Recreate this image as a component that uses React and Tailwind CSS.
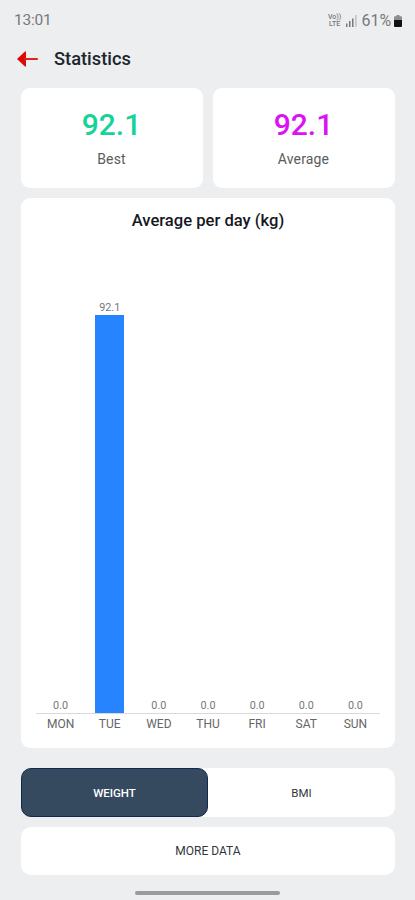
import React from "react";

const days = [
  { name: "MON", value: 0 },
  { name: "TUE", value: 92.1 },
  { name: "WED", value: 0 },
  { name: "THU", value: 0 },
  { name: "FRI", value: 0 },
  { name: "SAT", value: 0 },
  { name: "SUN", value: 0 },
];

const PX_PER_KG = 398 / 92.1;

function StatusBar() {
  return (
    <div className="flex h-[42px] items-center justify-between pl-[14px] pr-[13px] text-[#77797b]">
      <span className="text-[15.5px] leading-none tracking-[-0.2px]">13:01</span>
      <div className="flex items-center">
        <div className="flex w-[14px] flex-col items-center text-[7px] leading-[7px] font-medium">
          <span>Vo))</span>
          <span>LTE</span>
        </div>
        <svg className="ml-[4px]" width="11" height="12" viewBox="0 0 11 12" fill="currentColor">
          <rect x="0" y="8.5" width="1.5" height="3.5" />
          <rect x="3" y="6" width="1.5" height="6" />
          <rect x="6" y="3.5" width="1.5" height="8.5" />
          <rect x="9.2" y="0" width="1.4" height="12" opacity=".4" />
        </svg>
        <span className="ml-[5px] text-[16px] leading-none tracking-[-0.1px]">61%</span>
        <svg className="ml-[3px]" width="8" height="12" viewBox="0 0 8 12">
          <path d="M2.5 0h3v1.2H7a1 1 0 0 1 1 1V6H0V2.200a1 1 0 0 1 1-1h1.500z" fill="#8d8e90" />
          <path d="M0 5h8v6a1 1 0 0 1-1 1H1a1 1 0 0 1-1-1z" fill="#111" />
        </svg>
      </div>
    </div>
  );
}

function Stat({ value, label, color }) {
  return (
    <div className="flex h-[100px] flex-1 flex-col items-center rounded-[9px] bg-white pt-[20px] pr-px">
      <span className={`text-[30px] leading-[34px] font-medium ${color}`}>{value}</span>
      <span className="mt-[8px] text-[14px] leading-[18px] tracking-[0.15px] text-[#5c5c5c]">{label}</span>
    </div>
  );
}

export default function App() {
  return (
    <div className="flex h-[900px] w-[415px] flex-col overflow-hidden bg-[#eceef0] font-[Roboto,sans-serif]">
      <StatusBar />
      <header className="flex h-[46px] items-start pl-[17px] pt-[6px]">
        <svg className="mt-[3px]" width="22" height="16" viewBox="0 0 22 16">
          <path d="M0 8L8 0.500Q9 0 9 1V15Q9 16 8 15.500Z" fill="#dc0909" />
          <path d="M8 8H20" stroke="#e52020" strokeWidth="2" strokeLinecap="round" />
        </svg>
        <h1 className="ml-[15px] text-[18.3px] leading-[21px] font-medium text-[#20242c]">Statistics</h1>
      </header>

      <main className="flex flex-col pl-[21px] pr-[20px]">
        <div className="flex gap-[10px]">
          <Stat value="92.1" label="Best" color="text-[#16d39a]" />
          <Stat value="92.1" label="Average" color="text-[#dc12f5]" />
        </div>

        <section className="mt-[10px] flex h-[550px] flex-col rounded-[9px] bg-white px-[15px] pt-[13px]">
          <h2 className="text-center text-[16.6px] leading-[20px] font-medium text-[#16191e]">Average per day (kg)</h2>
          <div className="flex h-[483px] items-end border-b border-[#d9d9d9]">
            {days.map((day) => (
              <div key={day.name} className="flex flex-1 flex-col items-center">
                <span className="mb-px text-[10.800px] leading-[12px] text-[#777]">{day.value.toFixed(1)}</span>
                <div className="w-[29px] bg-[#2684ff]" style={{ height: day.value * PX_PER_KG }} />
              </div>
            ))}
          </div>
          <div className="flex pt-[2px]">
            {days.map((day) => (
              <span key={day.name} className="flex-1 text-center text-[12px] leading-[16px] text-[#666]">{day.name}</span>
            ))}
          </div>
        </section>

        <div className="mt-[20px] flex h-[49px] rounded-[10px] bg-white text-[11.500px]">
          <button className="w-[187px] rounded-[10px] border border-[#10294d] bg-[#35495f] pt-[2px] font-medium text-white">WEIGHT</button>
          <button className="flex-1 pt-[2px] text-[#33363a]">BMI</button>
        </div>
        <button className="mt-[10px] h-[48px] rounded-[10px] bg-white text-[12px] text-[#33363a]">MORE DATA</button>
      </main>
      <div className="mt-[16px] h-[4px] w-[145px] self-center rounded-full bg-[#999b9d]" />
    </div>
  );
}
